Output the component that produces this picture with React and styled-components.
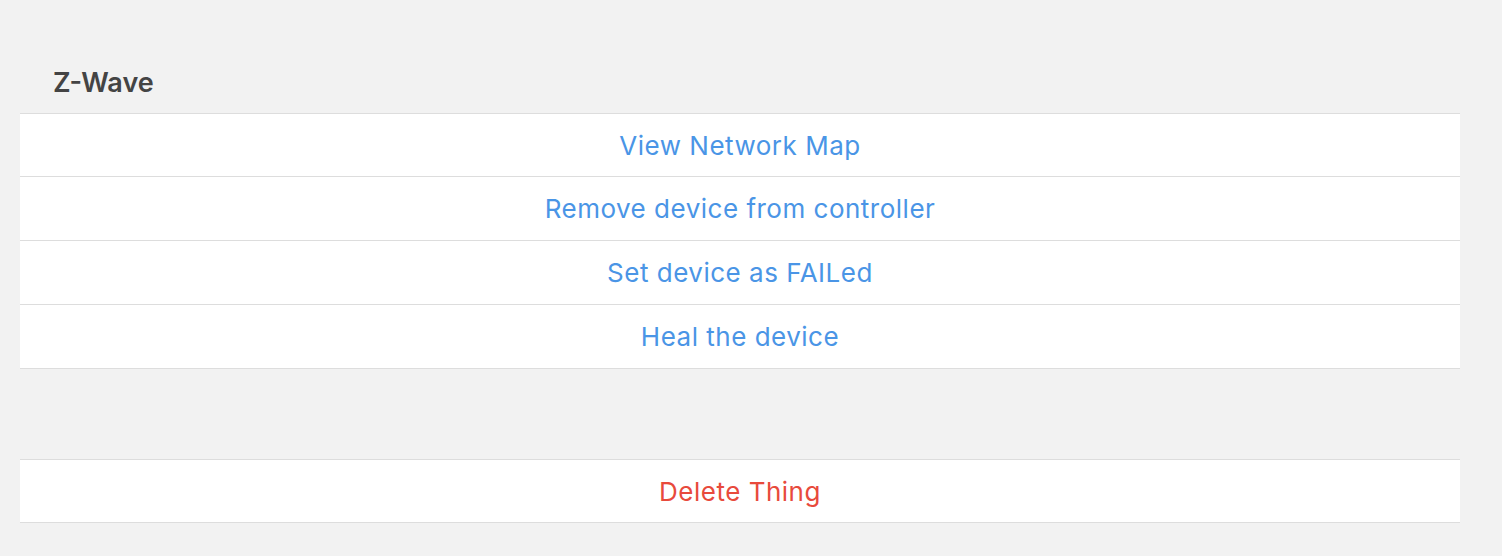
import { createGlobalStyle } from "styled-components";
import styled from "styled-components";

const GlobalStyle = createGlobalStyle`
  html, body {
    margin: 0;
    padding: 0;
    background-color: #f2f2f2;
    font-family: Inter, "Liberation Sans", sans-serif;
  }
`;

const Page = styled.div`
  display: flex;
  flex-direction: column;
  padding: 63px 42px 33px 20px;
  gap: 90px;
`;

const Section = styled.div`
  display: flex;
  flex-direction: column;
`;

const SectionTitle = styled.div`
  height: 50px;
  line-height: 40px;
  padding-left: 33px;
  font-size: 27px;
  font-weight: 600;
  color: #444444;
  box-sizing: border-box;
`;

const List = styled.div`
  display: flex;
  flex-direction: column;
  background-color: #ffffff;
  border-top: 1px solid #dddddd;
`;

const Row = styled.button`
  display: flex;
  align-items: center;
  justify-content: center;
  height: 64px;
  border: none;
  border-bottom: 1px solid #dddddd;
  background: transparent;
  padding: 0;
  margin: 0;
  font-family: inherit;
  font-size: 26px;
  font-weight: 400;
  letter-spacing: 0.5px;
  color: ${({ danger }) => (danger ? "#e84a3c" : "#4a95e6")};
  cursor: pointer;
  box-sizing: border-box;

  &:first-child {
    height: 63px;
  }
`;

const actions = [
  "View Network Map",
  "Remove device from controller",
  "Set device as FAILed",
  "Heal the device",
];

const App = () => {
  return (
    <>
      <GlobalStyle />
      <Page>
        <Section>
          <SectionTitle>Z-Wave</SectionTitle>
          <List>
            {actions.map((label) => (
              <Row key={label}>{label}</Row>
            ))}
          </List>
        </Section>
        <Section>
          <List>
            <Row danger>Delete Thing</Row>
          </List>
        </Section>
      </Page>
    </>
  );
};

export default App;
